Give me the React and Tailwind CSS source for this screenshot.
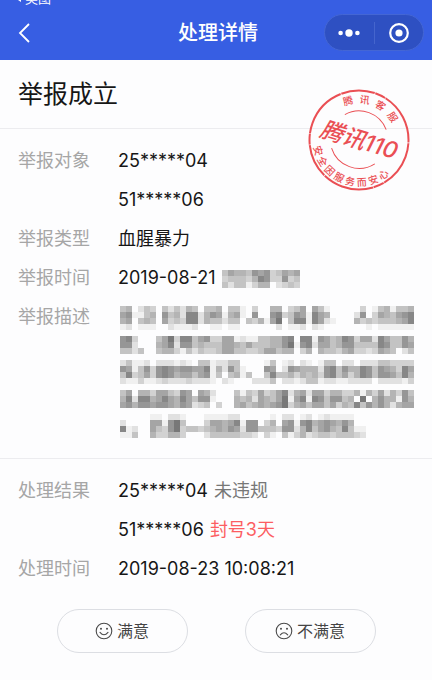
import React from "react";

const CELL = 6;

const TIME_MOSAIC = ["4655476734656", "3444358733734", "4244135502343"];

const DESCRIPTION_MOSAIC = [
  "4502430424254044504410300" + "550346064100000301451445",
  "6711450745288257615610700" + "783476186500002703654678",
  "5604540634388254424404351" + "690488186210005343444568",
  "1201110021112001101100000" + "020112021000000010111111",
  "",
  "7830004693884673366121144" + "557808817645873662864475",
  "7720005682774544466546444" + "557917826645774444874476",
  "4424004553142433466443346" + "645503505443563323654024",
  "",
  "2411202221210441224400001" + "401202101440220222443333",
  "7614737876776681527410007" + "602765552784755874765386",
  "4834637875664671404514004" + "844535453784635874776485",
  "2113112322232221021000222" + "402212441221122220222213",
  "",
  "4605536643760652000414363" + "468256266355335153625374",
  "5828856865864771000545265" + "469168187477450905755175",
  "6757767765762340300564565" + "679356466463548475752566",
  "",
  "0000011022100011112200000" + "102201201211110000000000",
  "2000066179400036656817703" + "506717856765750000000000",
  "8120064379344345657627744" + "437725846754841100000000",
  "1140053355300024444433203" + "104135234434443200000000",
];

function Mosaic({ rows, label, className }) {
  const width = Math.max(...rows.map((row) => row.length)) * CELL;
  const height = rows.length * CELL;
  return (
    <svg
      role="img"
      aria-label={label}
      className={className}
      width={width}
      height={height}
      viewBox={`0 0 ${width} ${height}`}
      shapeRendering="crispEdges"
    >
      {rows.flatMap((row, y) =>
        [...row].map((level, x) => {
          const shade = 255 - Number(level) * 15;
          return level === "0" ? null : (
            <rect
              key={`${x}-${y}`}
              x={x * CELL}
              y={y * CELL}
              width={CELL}
              height={CELL}
              fill={`rgb(${shade},${shade},${shade})`}
            />
          );
        })
      )}
    </svg>
  );
}

function Stamp() {
  return (
    <svg
      className="absolute right-[21px] top-[28px]"
      width="104"
      height="104"
      viewBox="-52 -52 104 104"
      fill="none"
      stroke="#ea4f54"
      role="img"
      aria-label="腾讯110"
    >
      <defs>
        <path id="stamp-top" d="M-37 0A37 37 0 0 1 37 0" />
        <path id="stamp-bottom" d="M-46 0A46 46 0 0 0 46 0" />
      </defs>
      <g transform="rotate(20)">
        <circle r="49.5" strokeWidth="2" strokeDasharray="34 0.6 11 0.5 52 0.7" />
        <path d="M-22 -19A29 29 0 0 1 22 -19" strokeWidth="1" />
        <path d="M-23 17A29 29 0 0 0 23 17" strokeWidth="1" />
        <g fill="#ea4f54" stroke="none" textAnchor="middle">
          <text fontSize="10" fontWeight="500">
            <textPath href="#stamp-top" startOffset="50%">{"腾\u00a0\u00a0讯\u00a0\u00a0客\u00a0\u00a0服"}</textPath>
          </text>
          <text fontSize="10" fontWeight="500">
            <textPath href="#stamp-bottom" startOffset="50%">安 全 因 服 务 而 安 心</textPath>
          </text>
          <text y="8" fontSize="23" fontWeight="500" fontStyle="italic" transform="rotate(-3)">
            腾讯110
          </text>
        </g>
      </g>
    </svg>
  );
}

function Face({ sad }) {
  return (
    <svg width="18" height="18" viewBox="0 0 18 18" fill="none" stroke="#4a4a4a" strokeWidth="1.1" strokeLinecap="round" aria-hidden="true">
      <circle cx="9" cy="9" r="7.8" />
      <circle cx="6" cy="6.8" r="1" fill="#4a4a4a" stroke="none" />
      <circle cx="12" cy="6.8" r="1" fill="#4a4a4a" stroke="none" />
      <path d={sad ? "M5.3 12.8Q9 8.8 12.7 12.8" : "M5 10.4Q9 15.2 13 10.4"} />
    </svg>
  );
}

function Row({ label, children }) {
  return (
    <div className="flex">
      <dt className="w-[100px] shrink-0 text-[#a6a6a6]">{label}</dt>
      <dd className="min-w-0 flex-1">{children}</dd>
    </div>
  );
}

function Choice({ sad, children }) {
  return (
    <button
      type="button"
      className="flex h-11 w-[131px] items-center justify-center gap-1 rounded-full border border-[#dcdee3] text-base text-[#444]"
    >
      <Face sad={sad} />
      {children}
    </button>
  );
}

export default function App() {
  return (
    <div className="min-h-screen bg-[#fdfdfe] font-[Inter,'Noto_Sans_CJK_SC',sans-serif] text-lg leading-[39px] text-[#161616]">
      <header className="overflow-hidden bg-[#375ee3] text-white">
        <div className="flex h-[5px] items-end pl-[15px] text-[13px] leading-[14px]">
          <span className="flex items-center gap-1">
            <svg width="6" height="8" viewBox="0 0 6 8" fill="currentColor" aria-hidden="true">
              <path d="M6 0V8L0 4Z" />
            </svg>
            美图
          </span>
        </div>
        <div className="grid h-[55px] grid-cols-[1fr_auto_1fr] items-center pl-3 pr-2">
          <button type="button" aria-label="返回" className="flex h-10 w-6 items-center justify-center">
            <svg width="12" height="20" viewBox="0 0 12 20" fill="none" stroke="currentColor" strokeWidth="1.8" aria-hidden="true">
              <path d="M11 1L2 10L11 19" />
            </svg>
          </button>
          <h1 className="text-xl font-medium">处理详情</h1>
          <div className="flex h-[37px] w-[100px] items-center justify-self-end rounded-full border border-[#4466d4] bg-[#2e50c2]">
            <button type="button" aria-label="更多" className="flex h-full flex-1 items-center justify-center">
              <svg width="22" height="8" viewBox="0 0 22 8" fill="currentColor" aria-hidden="true">
                <circle cx="2.6" cy="4" r="2.3" />
                <circle cx="11" cy="4" r="3.7" />
                <circle cx="19.4" cy="4" r="2.3" />
              </svg>
            </button>
            <span className="h-[22px] w-px bg-[#4565cd]" />
            <button type="button" aria-label="关闭" className="flex h-full flex-1 items-center justify-center">
              <svg width="20" height="20" viewBox="0 0 20 20" fill="none" aria-hidden="true">
                <circle cx="10" cy="10" r="8.8" stroke="currentColor" strokeWidth="2.2" />
                <circle cx="10" cy="10" r="3.6" fill="currentColor" />
              </svg>
            </button>
          </div>
        </div>
      </header>

      <main className="relative">
        <h2 className="border-b border-[#ececef] px-[18px] pb-[14px] pt-[15px] text-[25px] leading-[39px]">举报成立</h2>
        <Stamp />

        <dl className="border-b border-[#ececef] px-[18px] pb-5 pt-3">
          <Row label="举报对象">
            <p>25*****04</p>
            <p>51*****06</p>
          </Row>
          <Row label="举报类型">血腥暴力</Row>
          <Row label="举报时间">
            <span className="flex items-center gap-[6px]">
              2019-08-21
              <Mosaic rows={TIME_MOSAIC} label="时间已打码" className="mt-0.5" />
            </span>
          </Row>
          <Row label="举报描述">
            <Mosaic rows={DESCRIPTION_MOSAIC} label="描述已打码" className="ml-0.5 mt-[9px] block max-w-full" />
          </Row>
        </dl>

        <dl className="px-[18px] pt-3">
          <Row label="处理结果">
            <p className="flex gap-[6px]">
              25*****04<span className="text-[#777]">未违规</span>
            </p>
            <p className="flex gap-[6px]">
              51*****06<span className="text-[#fc5d62]">封号3天</span>
            </p>
          </Row>
          <Row label="处理时间">2019-08-23 10:08:21</Row>
        </dl>

        <div className="flex justify-center gap-[57px] pb-7 pt-[21px]">
          <Choice>满意</Choice>
          <Choice sad>不满意</Choice>
        </div>
      </main>
    </div>
  );
}
